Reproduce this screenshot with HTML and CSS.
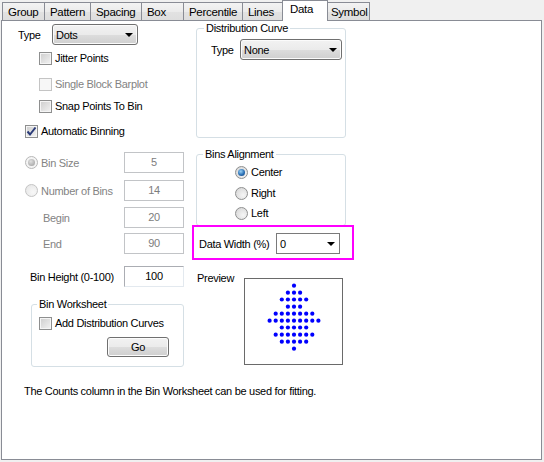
FILE: index.html
```html
<!DOCTYPE html>
<html>
<head>
<meta charset="utf-8">
<link rel="stylesheet" href="styles.css">
</head>
<body>
<div class="tabs">
  <div class="tab t-group">Group</div>
  <div class="tab t-pattern">Pattern</div>
  <div class="tab t-spacing">Spacing</div>
  <div class="tab t-box">Box</div>
  <div class="tab t-percentile">Percentile</div>
  <div class="tab t-lines">Lines</div>
  <div class="tab active t-data">Data</div>
  <div class="tab t-symbol">Symbol</div>
</div>
<div class="panel">
  <div class="content">
    <div class="left">
      <div class="row type-row">
        <span class="type-lbl">Type</span>
        <div class="combo combo-btn dots"><span>Dots</span><i class="arrow"></i></div>
      </div>
      <div class="row chk-row r-jitter"><span class="chk"></span><span>Jitter Points</span></div>
      <div class="row chk-row r-single disabled"><span class="chk dis"></span><span>Single Block Barplot</span></div>
      <div class="row chk-row r-snap"><span class="chk"></span><span>Snap Points To Bin</span></div>
      <div class="row auto-row"><span class="chk"><svg width="11" height="11" viewBox="0 0 11 11"><path d="M1.5 5.5 L4 8.5 L9.5 1.5" fill="none" stroke="#2a3a78" stroke-width="2"/></svg></span><span>Automatic Binning</span></div>

      <div class="binrow b-size disabled">
        <div class="bin-lbl radio-lbl"><span class="radio sel-dis"></span><span>Bin Size</span></div>
        <div class="tbox">5</div>
      </div>
      <div class="binrow b-num disabled">
        <div class="bin-lbl radio-lbl"><span class="radio dis"></span><span>Number of Bins</span></div>
        <div class="tbox">14</div>
      </div>
      <div class="binrow b-begin disabled">
        <div class="bin-lbl sub-lbl">Begin</div>
        <div class="tbox">20</div>
      </div>
      <div class="binrow b-end disabled">
        <div class="bin-lbl sub-lbl">End</div>
        <div class="tbox">90</div>
      </div>
      <div class="binrow b-height">
        <div class="bin-lbl height-lbl">Bin Height (0-100)</div>
        <div class="tbox enabled">100</div>
      </div>

      <fieldset class="group ws">
        <legend>Bin Worksheet</legend>
        <div class="row ws-chk"><span class="chk"></span><span>Add Distribution Curves</span></div>
        <div class="btn go">Go</div>
      </fieldset>
    </div>

    <div class="right">
      <fieldset class="group dist">
        <legend>Distribution Curve</legend>
        <div class="row dist-row">
          <span class="dist-lbl">Type</span>
          <div class="combo combo-btn none"><span>None</span><i class="arrow"></i></div>
        </div>
      </fieldset>

      <fieldset class="group align">
        <legend>Bins Alignment</legend>
        <div class="row radio-row r-center"><span class="radio sel"></span><span>Center</span></div>
        <div class="row radio-row r-right"><span class="radio"></span><span>Right</span></div>
        <div class="row radio-row r-left"><span class="radio"></span><span>Left</span></div>
      </fieldset>

      <div class="highlight">
        <span class="dw-lbl">Data Width (%)</span>
        <div class="combo combo-edit dw"><span>0</span><i class="arrow"></i></div>
      </div>

      <div class="preview-row">
        <span class="preview-lbl">Preview</span>
        <div class="preview">
          <svg width="97" height="85" viewBox="0 0 97 85">
            <g fill="#0000ff">
              <circle cx="49" cy="6.7" r="2.1"/>
              <circle cx="42.9" cy="13.7" r="2.1"/><circle cx="49" cy="13.7" r="2.1"/><circle cx="55.1" cy="13.7" r="2.1"/>
              <circle cx="36.8" cy="20.5" r="2.1"/><circle cx="42.9" cy="20.5" r="2.1"/><circle cx="49" cy="20.5" r="2.1"/><circle cx="55.1" cy="20.5" r="2.1"/><circle cx="61.2" cy="20.5" r="2.1"/>
              <circle cx="42.9" cy="27.7" r="2.1"/><circle cx="49" cy="27.7" r="2.1"/><circle cx="55.1" cy="27.7" r="2.1"/>
              <circle cx="30.7" cy="34.7" r="2.1"/><circle cx="36.8" cy="34.7" r="2.1"/><circle cx="42.9" cy="34.7" r="2.1"/><circle cx="49" cy="34.7" r="2.1"/><circle cx="55.1" cy="34.7" r="2.1"/><circle cx="61.2" cy="34.7" r="2.1"/><circle cx="67.3" cy="34.7" r="2.1"/>
              <circle cx="24.6" cy="41.7" r="2.1"/><circle cx="30.7" cy="41.7" r="2.1"/><circle cx="36.8" cy="41.7" r="2.1"/><circle cx="42.9" cy="41.7" r="2.1"/><circle cx="49" cy="41.7" r="2.1"/><circle cx="55.1" cy="41.7" r="2.1"/><circle cx="61.2" cy="41.7" r="2.1"/><circle cx="67.3" cy="41.7" r="2.1"/><circle cx="73.4" cy="41.7" r="2.1"/>
              <circle cx="36.8" cy="48.5" r="2.1"/><circle cx="42.9" cy="48.5" r="2.1"/><circle cx="49" cy="48.5" r="2.1"/><circle cx="55.1" cy="48.5" r="2.1"/><circle cx="61.2" cy="48.5" r="2.1"/>
              <circle cx="30.7" cy="55.7" r="2.1"/><circle cx="36.8" cy="55.7" r="2.1"/><circle cx="42.9" cy="55.7" r="2.1"/><circle cx="49" cy="55.7" r="2.1"/><circle cx="55.1" cy="55.7" r="2.1"/><circle cx="61.2" cy="55.7" r="2.1"/><circle cx="67.3" cy="55.7" r="2.1"/>
              <circle cx="36.8" cy="62.7" r="2.1"/><circle cx="42.9" cy="62.7" r="2.1"/><circle cx="49" cy="62.7" r="2.1"/><circle cx="55.1" cy="62.7" r="2.1"/><circle cx="61.2" cy="62.7" r="2.1"/>
              <circle cx="49" cy="69.7" r="2.1"/>
            </g>
          </svg>
        </div>
      </div>
    </div>
  </div>
  <p class="note">The Counts column in the Bin Worksheet can be used for fitting.</p>
</div>
</body>
</html>
```

FILE: styles.css
```css
* { box-sizing: border-box; }
html, body { margin: 0; padding: 0; }
body {
  width: 544px;
  height: 462px;
  background: #f0f0f0;
  font-family: "Liberation Sans", Arial, sans-serif;
  font-size: 11px;
  letter-spacing: -0.3px;
  color: #000;
  overflow: hidden;
}

/* ---------- tabs ---------- */
.tabs {
  display: flex;
  align-items: flex-end;
  height: 20px;
  padding-left: 2px;
  position: relative;
  z-index: 2;
}
.tab {
  height: 18px;
  border: 1px solid #898c95;
  border-bottom: none;
  margin-left: -1px;
  padding: 3px 0 0 5px;
  line-height: 13px;
  font-size: 11.5px;
  background: linear-gradient(#f3f3f3, #ebebeb 50%, #e2e2e2 51%, #dedede);
}
.tab:first-child { margin-left: 0; }
.t-group { width: 43px; }
.t-pattern { width: 47px; }
.t-spacing { width: 52px; }
.t-box { width: 43px; }
.t-percentile { width: 60px; }
.t-lines { width: 43px; }
.t-data { width: 46px; }
.t-symbol { width: 45px; }
.tab.active {
  height: 21px;
  margin-left: -3px;
  margin-right: -2px;
  margin-bottom: -1px;
  padding: 2px 0 0 7px;
  background: #fff;
  position: relative;
  z-index: 3;
}

/* ---------- panel ---------- */
.panel {
  margin-left: 1px;
  width: 541px;
  height: 440px;
  border: 1px solid #898c95;
  background: #fff;
  position: relative;
  z-index: 1;
}
.content {
  display: flex;
  align-items: flex-start;
}
.left {
  width: 194px;
  padding-left: 16px;
}
.right {
  width: 150px;
}

.row {
  display: flex;
  align-items: center;
  height: 20px;
}
.disabled { color: #838383; }

/* left column rows */
.type-row { margin-top: 3px; height: 21px; }
.type-lbl { width: 34px; }
.dots { width: 86px; }

.chk-row { padding-left: 21px; }
.r-jitter { margin-top: 3px; }
.r-single { margin-top: 6px; }
.r-snap { margin-top: 2px; }
.auto-row { margin-top: 5px; padding-left: 7px; }

.chk {
  width: 13px;
  height: 13px;
  flex: none;
  margin-right: 3px;
  border: 1px solid #8e8f8f;
  background: linear-gradient(135deg, #cdcdcd, #f3f3f3);
  box-shadow: inset 0 0 0 1px #f5f5f5;
  display: flex;
  align-items: center;
  justify-content: center;
}
.chk svg { display: block; }
.chk.dis {
  border-color: #c4c4c4;
  background: #f7f7f7;
  box-shadow: none;
}

.radio {
  width: 13px;
  height: 13px;
  flex: none;
  margin-right: 3px;
  border-radius: 50%;
  border: 1px solid #8e8f8f;
  background: radial-gradient(circle at 65% 65%, #f6f6f6, #d2d2d2);
  display: flex;
  align-items: center;
  justify-content: center;
}
.radio.dis {
  border-color: #c4c4c4;
  background: radial-gradient(circle at 65% 65%, #f8f8f8, #e4e4e4);
}
.radio.sel::after,
.radio.sel-dis::after {
  content: "";
  width: 7px;
  height: 7px;
  border-radius: 50%;
}
.radio.sel::after {
  background: radial-gradient(circle at 40% 35%, #9ad2f6, #2a70b5 55%, #143e74);
}
.radio.sel-dis { border-color: #b8b8b8; background: #f4f4f4; }
.radio.sel-dis::after {
  background: radial-gradient(circle at 40% 35%, #e0e0e0, #9a9a9a);
}

.binrow {
  display: flex;
  align-items: center;
  height: 21px;
}
.b-size { margin-top: 11px; }
.b-num { margin-top: 7px; }
.b-begin { margin-top: 6px; }
.b-end { margin-top: 5px; }
.b-height { margin-top: 12px; }
.bin-lbl {
  width: 106px;
  display: flex;
  align-items: center;
}
.radio-lbl { padding-left: 7px; }
.sub-lbl { padding-left: 25px; }
.height-lbl { padding-left: 12px; }
.tbox {
  width: 60px;
  height: 21px;
  border: 1px solid #c2c4c7;
  background: #fff;
  text-align: center;
  line-height: 19px;
  color: #7d7d7d;
}
.tbox.enabled {
  color: #000;
  border-color: #abadb3 #e3e9ef #e3e9ef #abadb3;
}

/* group boxes */
.group {
  margin: 0;
  padding: 0;
  border: 1px solid #d5dfe5;
  border-radius: 3px;
  min-width: 0;
}
.group legend {
  padding: 0 2px;
  line-height: 14px;
}
.ws {
  margin-top: 10px;
  margin-left: 13px;
  width: 153px;
  padding-bottom: 9px;
}
.ws legend { margin-left: 5px; }
.ws-chk { margin-top: 2px; padding-left: 7px; }
.btn {
  margin-top: 4px;
  margin-left: 75px;
  width: 62px;
  height: 20px;
  border: 1px solid #707070;
  border-radius: 3px;
  background: linear-gradient(#f2f2f2, #ebebeb 50%, #dddddd 51%, #cfcfcf);
  box-shadow: inset 0 0 0 1px #fcfcfc;
  text-align: center;
  line-height: 18px;
}

/* combos */
.combo {
  height: 21px;
  display: flex;
  align-items: center;
  justify-content: space-between;
  padding: 0 3px 0 3px;
}
.combo-btn {
  border: 1px solid #707070;
  border-radius: 3px;
  background: linear-gradient(#f2f2f2, #ebebeb 50%, #dddddd 51%, #cfcfcf);
  box-shadow: inset 0 0 0 1px #fbfbfb;
}
.combo-edit {
  border: 1px solid #7a7a7a;
  background: #fff;
}
.arrow {
  width: 0;
  height: 0;
  border-left: 4px solid transparent;
  border-right: 4px solid transparent;
  border-top: 4px solid #000;
  margin-right: 1px;
  margin-top: 1px;
}

/* right column */
.dist { width: 150px; padding-bottom: 77px; }
.dist legend { margin-left: 7px; }
.dist-row { margin-top: 4px; padding-left: 14px; height: 21px; }
.dist-lbl { width: 29px; }
.none { width: 102px; }

.align { margin-top: 9px; width: 150px; padding-bottom: 2px; }
.align legend { margin-left: 6px; }
.radio-row { padding-left: 38px; }
.r-center { margin-top: 1px; }
.r-right { margin-top: 1px; }

.highlight {
  position: relative;
  z-index: 2;
  margin-top: -1px;
  margin-left: -4px;
  width: 162px;
  height: 35px;
  border: 2px solid #ff00ff;
  background: #fff;
  padding: 6px 0 0 5px;
  display: flex;
  align-items: center;
  align-content: flex-start;
  flex-wrap: wrap;
}
.dw-lbl { width: 77px; }
.dw { width: 64px; }

.preview-row {
  display: flex;
  align-items: flex-start;
  margin-top: 11px;
}
.preview-lbl {
  width: 47px;
  margin-left: 1px;
  line-height: 14px;
}
.preview {
  margin-top: 7px;
  width: 99px;
  height: 87px;
  border: 1px solid #6a6a6a;
}
.preview svg { display: block; }

.note {
  margin: 17px 0 0 22px;
  line-height: 14px;
}
```
